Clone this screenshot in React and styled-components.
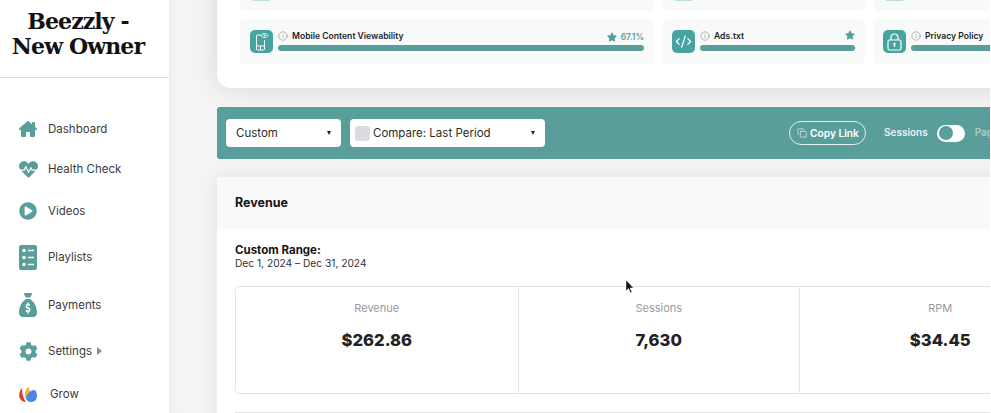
import React from "react"
import styled, { createGlobalStyle } from "styled-components"
import { FaHeartbeat, FaPlayCircle, FaStar, FaCog } from "react-icons/fa"
import { FaHouseChimney, FaSackDollar } from "react-icons/fa6"
import { Info, Copy, CodeXml } from "lucide-react"

const teal = "#5a9e9c"
const tile = "#45a3a0"

const GlobalStyle = createGlobalStyle`
  html, body {
    margin: 0;
    height: 100%;
    overflow: hidden;
    background: #fff;
  }
  body {
    font-family: Inter, "Open Sans", sans-serif;
    color: #222;
  }
`

const Page = styled.div`
  position: relative;
  display: flex;
  width: 990px;
  height: 413px;
  overflow: hidden;
`

const Sidebar = styled.aside`
  flex: 0 0 169px;
  background: #fff;
  z-index: 2;
`

const Brand = styled.h1`
  height: 59px;
  margin: 0;
  padding: 9px 13px 9px 0;
  border-bottom: 1px solid #dcdce0;
  font-family: "DejaVu Serif", serif;
  font-size: 22px;
  line-height: 25px;
  font-weight: 700;
  letter-spacing: -0.9px;
  text-align: center;
  color: #111;
`

const Nav = styled.nav`
  display: flex;
  flex-direction: column;
  padding-top: 31px;
`

const NavItem = styled.a`
  display: flex;
  align-items: center;
  flex: 0 0 ${(p) => p.$h}px;
  padding-left: 19px;
  gap: ${(p) => p.$gap || 11}px;
  font-size: 11.5px;
  color: #3a3a3e;
  svg {
    display: block;
    flex: none;
  }
`

const IconSlot = styled.span`
  display: flex;
  justify-content: center;
  width: 18px;
  color: ${teal};
`

const Sack = styled(FaSackDollar)`
  width: 18px;
  height: 24px;
`

const Caret = styled.span`
  width: 0;
  height: 0;
  margin-left: -6px;
  border-left: 5px solid #8d8d90;
  border-top: 4px solid transparent;
  border-bottom: 4px solid transparent;
`

const Main = styled.main`
  flex: 1;
  min-width: 0;
  padding-left: 48px;
  background: #f4f4f5;
  box-shadow: inset 6px 0 12px -8px rgba(0, 0, 0, 0.06);
`

const Content = styled.div`
  width: 1000px;
  margin-top: -32px;
`

const ScoreCard = styled.section`
  display: grid;
  grid-template-columns: 414px 203px 203px;
  gap: 8px;
  padding: 0 0 24px 23px;
  background: #fff;
  border-radius: 0 0 14px 14px;
  box-shadow: 0 0 24px rgba(0, 0, 0, 0.12);
`

const Score = styled.div`
  display: flex;
  align-items: center;
  gap: 5px;
  height: ${(p) => p.$h}px;
  padding: 0 10px;
  background: #f8f9f9;
  border-radius: 5px;
`

const Tile = styled.div`
  flex: 0 0 23px;
  height: 23px;
  display: flex;
  align-items: center;
  justify-content: center;
  border-radius: 5px;
  background: ${(p) => (p.$pale ? "#b9dedc" : tile)};
  color: #fff;
`

const ScoreBody = styled.div`
  flex: 1;
  min-width: 0;
  margin-top: -3px;
  padding-top: 2px;
`

const ScoreHead = styled.div`
  display: flex;
  align-items: flex-start;
  height: 14px;
  color: #777;
`

const ScoreName = styled.span`
  margin-left: 4px;
  font-size: 8.6px;
  line-height: 11px;
  font-weight: 600;
  color: #1e1e1e;
  white-space: nowrap;
`

const ScoreValue = styled.span`
  display: flex;
  align-items: center;
  gap: 4px;
  margin-left: auto;
  margin-top: ${(p) => p.$top}px;
  font-size: 8.5px;
  font-weight: 600;
  color: ${teal};
`

const Bar = styled.div`
  height: 6px;
  border-radius: 3px;
  background: ${teal};
`

const FilterBar = styled.section`
  display: flex;
  align-items: center;
  height: 52px;
  margin-top: 19px;
  padding: 0 9px;
  background: ${teal};
  border-radius: 3px 0 0 3px;
`

const Select = styled.div`
  display: flex;
  align-items: center;
  justify-content: space-between;
  width: ${(p) => p.$w}px;
  height: 28px;
  margin-right: 9px;
  padding: 0 10px 0 ${(p) => p.$pl}px;
  box-sizing: border-box;
  background: #fff;
  border-radius: 4px;
  font-size: 11.5px;
  color: #2c2c2c;
`

const SelectLabel = styled.span`
  display: flex;
  align-items: center;
  gap: 3px;
`

const Swatch = styled.span`
  width: 15px;
  height: 15px;
  border-radius: 3px;
  background: #dcdbdf;
`

const Arrow = styled.span`
  width: 0;
  height: 0;
  border-top: 4px solid #222;
  border-left: 2.5px solid transparent;
  border-right: 2.5px solid transparent;
`

const CopyLink = styled.button`
  display: flex;
  align-items: center;
  gap: 3px;
  width: 77px;
  height: 24px;
  margin-left: 235px;
  padding: 0 0 0 7px;
  box-sizing: border-box;
  border: 1px solid #e4efee;
  border-radius: 12px;
  background: transparent;
  color: #fff;
  font-family: inherit;
  font-size: 10.2px;
  font-weight: 600;
  white-space: nowrap;
`

const ToggleLabel = styled.span`
  margin-left: ${(p) => p.$ml}px;
  margin-top: -3px;
  font-size: 10px;
  font-weight: 600;
  color: ${(p) => (p.$dim ? "#a9cdcb" : "#e8f2f1")};
`

const Toggle = styled.span`
  display: flex;
  align-items: center;
  width: 28px;
  height: 17px;
  margin-left: 9px;
  box-sizing: border-box;
  padding-left: 1px;
  border-radius: 9px;
  background: #fff;
  &::before {
    content: "";
    width: 14px;
    height: 14px;
    margin-left: 1px;
    border-radius: 50%;
    background: ${teal};
  }
`

const RevenueCard = styled.section`
  margin-top: 18px;
  background: #fff;
  box-shadow: 0 0 18px rgba(0, 0, 0, 0.08);
`

const CardHeader = styled.header`
  display: flex;
  align-items: center;
  height: 50px;
  padding: 0 18px 2px;
  background: #f9f9f9;
  font-size: 12.5px;
  font-weight: 700;
  color: #161616;
`

const CardBody = styled.div`
  padding: 15px 18px 0;
`

const RangeTitle = styled.div`
  font-size: 11.5px;
  line-height: 13px;
  font-weight: 700;
  color: #161616;
`

const RangeDates = styled.div`
  font-size: 10.2px;
  line-height: 12px;
  color: #333;
`

const StatBox = styled.div`
  display: grid;
  grid-template-columns: repeat(3, 281.5px);
  height: 108px;
  margin-top: 17px;
  box-sizing: border-box;
  border: 1px solid #e2e2e6;
  border-radius: 5px;
`

const Stat = styled.div`
  padding-top: 14px;
  text-align: center;
  border-left: ${(p) => (p.$first ? "none" : "1px solid #e6e6ea")};
`

const StatLabel = styled.div`
  font-size: 11px;
  line-height: 14px;
  color: #9a9a9e;
`

const StatValue = styled.div`
  margin-top: 14px;
  font-size: 16.6px;
  line-height: 22px;
  font-weight: 800;
  color: #222;
`

const NextBox = styled.div`
  height: 20px;
  margin-top: 18px;
  border-top: 1px solid #e2e2e6;
`

const Pointer = styled.svg`
  position: absolute;
  left: 625px;
  top: 280px;
`

function PlaylistIcon() {
  return (
    <svg width="18" height="25" viewBox="0 0 18 25">
      <rect width="18" height="25" rx="2" fill={teal} />
      <circle cx="5" cy="5.5" r="1.8" fill="#fff" />
      <circle cx="5" cy="12.5" r="1.8" fill="#fff" />
      <circle cx="5" cy="19.5" r="1.8" fill="#fff" />
      <path d="M9 5.5h6M9 12.5h6M9 19.5h6" stroke="#fff" strokeWidth="1.3" />
    </svg>
  )
}

function GrowIcon() {
  return (
    <svg width="18" height="15" viewBox="0 0 18 15">
      <path d="M3 1C0 4-1 10 2 13c1 1 3 2 5 2C4 11 3 6 3 1z" fill="#d0452c" />
      <path d="M9 0C6 3 5 8 7 12c1-4 3-6 4-8-.5-2-1-3-2-4z" fill="#f2b632" />
      <path d="M15 3c-4 0-7 4-8 8 0 2 2 4 5 4 4 0 6-3 6-6 0-3-1-6-3-6z" fill="#4c84e8" />
    </svg>
  )
}

function PhoneIcon() {
  return (
    <svg width="15" height="19" viewBox="0 0 15 19" fill="none" stroke="#fff" strokeWidth="1">
      <path d="M7 3H3.5a1 1 0 0 0-1 1v13a1 1 0 0 0 1 1h6a1 1 0 0 0 1-1V8" />
      <path d="M2.5 14h8M6.5 14v4" />
      <path d="M7 3.5C8 2 9 1.5 10.5 1.5S13 2 14 3.5c-1 1.5-2 2-3.5 2S8 5 7 3.5z" />
      <circle cx="10.5" cy="3.5" r="1" fill="#fff" stroke="none" />
    </svg>
  )
}

function LockIcon() {
  return (
    <svg width="15" height="18" viewBox="0 0 15 18" fill="none" stroke="#fff" strokeWidth="1.2">
      <rect x="1" y="7" width="13" height="10" rx="1.5" />
      <path d="M4 7V4.5a3.5 3.5 0 0 1 7 0V7" />
      <circle cx="7.5" cy="11" r="1.2" fill="#fff" stroke="none" />
      <path d="M7.5 11v3" />
    </svg>
  )
}

const navItems = [
  { label: "Dashboard", h: 40, icon: <FaHouseChimney size={18} /> },
  { label: "Health Check", h: 40, icon: <FaHeartbeat size={19} /> },
  { label: "Videos", h: 44, icon: <FaPlayCircle size={18} /> },
  { label: "Playlists", h: 48, icon: <PlaylistIcon /> },
  { label: "Payments", h: 48, icon: <Sack preserveAspectRatio="none" /> },
  { label: "Settings", h: 44, icon: <FaCog size={19} />, caret: true },
  { label: "Grow", h: 42, icon: <GrowIcon />, gap: 13 },
]

export default function App() {
  return (
    <Page>
      <GlobalStyle />
      <Sidebar>
        <Brand>
          Beezzly -<br />
          New Owner
        </Brand>
        <Nav>
          {navItems.map((item) => (
            <NavItem key={item.label} $h={item.h} $gap={item.gap}>
              <IconSlot>{item.icon}</IconSlot>
              {item.label}
              {item.caret && <Caret />}
            </NavItem>
          ))}
        </Nav>
      </Sidebar>

      <Main>
        <Content>
          <ScoreCard>
            <Score $h={43}><Tile $pale /></Score>
            <Score $h={43}><Tile $pale /></Score>
            <Score $h={43}><Tile $pale /></Score>

            <Score $h={45}>
              <Tile><PhoneIcon /></Tile>
              <ScoreBody>
                <ScoreHead>
                  <Info size={10} strokeWidth={1.3} />
                  <ScoreName>Mobile Content Viewability</ScoreName>
                  <ScoreValue $top={1}>
                    <FaStar size={10} />
                    67.1%
                  </ScoreValue>
                </ScoreHead>
                <Bar />
              </ScoreBody>
            </Score>
            <Score $h={45}>
              <Tile><CodeXml size={17} strokeWidth={1.8} /></Tile>
              <ScoreBody>
                <ScoreHead>
                  <Info size={10} strokeWidth={1.3} />
                  <ScoreName>Ads.txt</ScoreName>
                  <ScoreValue $top={-1}>
                    <FaStar size={10} />
                  </ScoreValue>
                </ScoreHead>
                <Bar />
              </ScoreBody>
            </Score>
            <Score $h={45}>
              <Tile><LockIcon /></Tile>
              <ScoreBody>
                <ScoreHead>
                  <Info size={10} strokeWidth={1.3} />
                  <ScoreName>Privacy Policy</ScoreName>
                </ScoreHead>
                <Bar />
              </ScoreBody>
            </Score>
          </ScoreCard>

          <FilterBar>
            <Select $w={115} $pl={10}>
              Custom
              <Arrow />
            </Select>
            <Select $w={195} $pl={5}>
              <SelectLabel>
                <Swatch />
                Compare: Last Period
              </SelectLabel>
              <Arrow />
            </Select>
            <CopyLink>
              <Copy size={10} strokeWidth={1.4} />
              Copy Link
            </CopyLink>
            <ToggleLabel $ml={18}>Sessions</ToggleLabel>
            <Toggle />
            <ToggleLabel $ml={10} $dim>Pageviews</ToggleLabel>
          </FilterBar>

          <RevenueCard>
            <CardHeader>Revenue</CardHeader>
            <CardBody>
              <RangeTitle>Custom Range:</RangeTitle>
              <RangeDates>Dec 1, 2024 – Dec 31, 2024</RangeDates>
              <StatBox>
                <Stat $first>
                  <StatLabel>Revenue</StatLabel>
                  <StatValue>$262.86</StatValue>
                </Stat>
                <Stat>
                  <StatLabel>Sessions</StatLabel>
                  <StatValue>7,630</StatValue>
                </Stat>
                <Stat>
                  <StatLabel>RPM</StatLabel>
                  <StatValue>$34.45</StatValue>
                </Stat>
              </StatBox>
              <NextBox />
            </CardBody>
          </RevenueCard>
        </Content>
      </Main>

      <Pointer width="9" height="14" viewBox="0 0 9 14">
        <path d="M1 0v11l2.5-2.5L5.5 13l1.5-.7L5 8h3.5z" fill="#111" stroke="#fff" strokeWidth="0.5" />
      </Pointer>
    </Page>
  )
}
